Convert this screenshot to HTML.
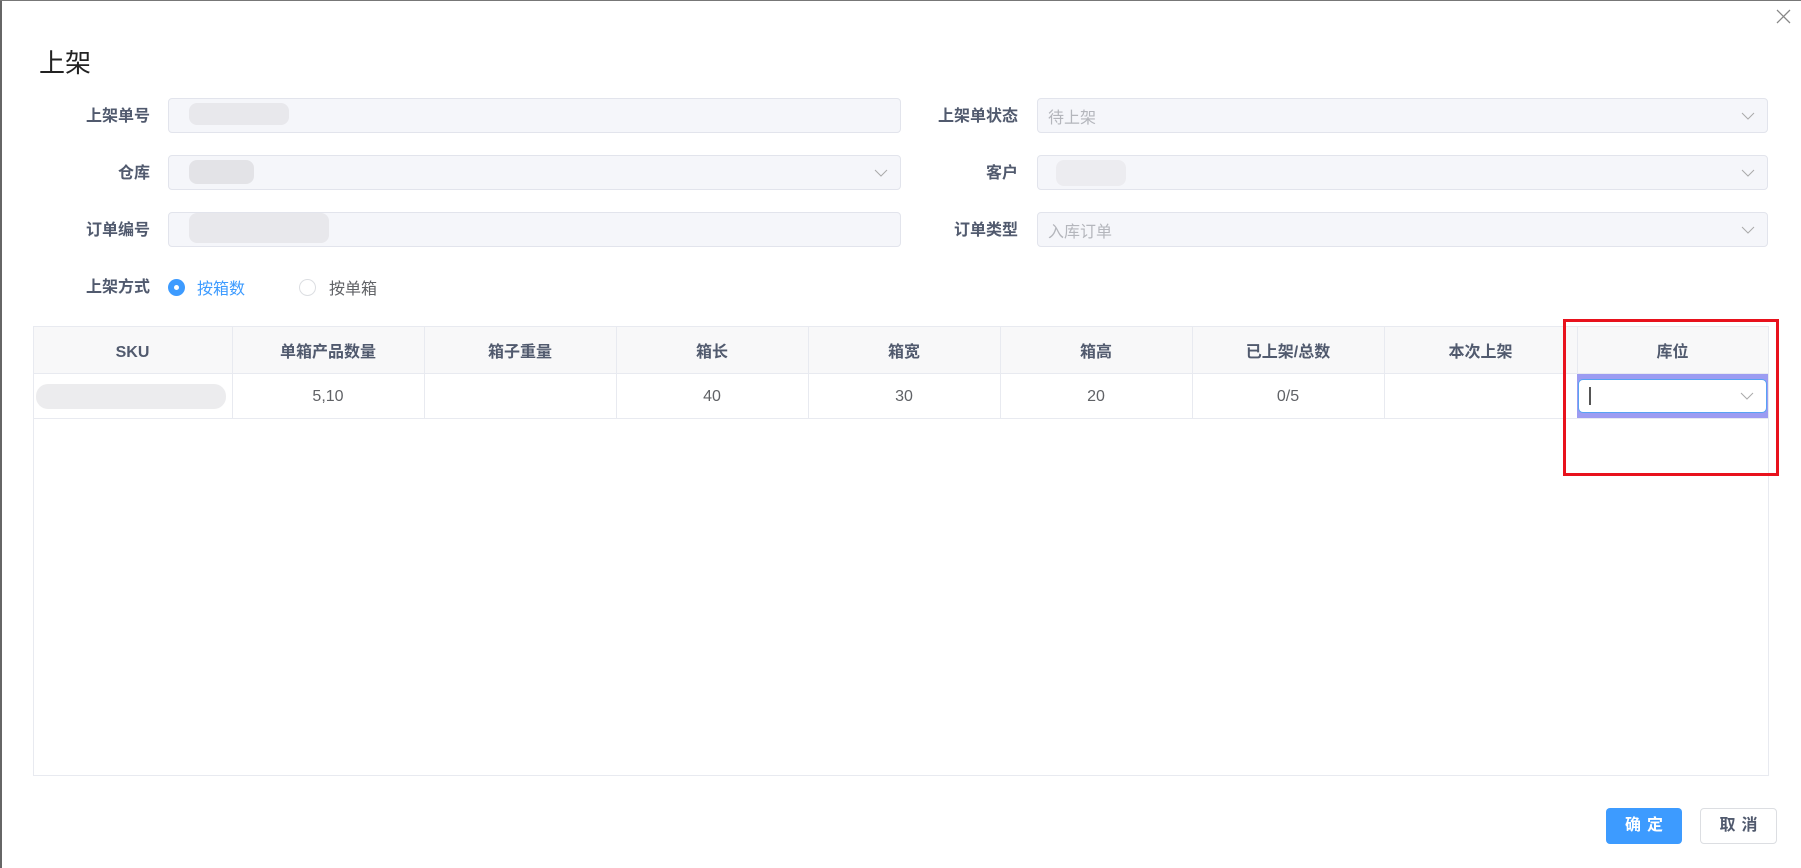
<!DOCTYPE html>
<html><head><meta charset="utf-8"><style>
*{box-sizing:border-box;margin:0;padding:0}
body{width:1801px;height:868px;overflow:hidden;background:#fff;font-family:"Liberation Sans","Noto Sans CJK SC",sans-serif;position:relative}
.a{position:absolute}
.lbl{position:absolute;font-size:16px;font-weight:bold;color:#515a6e;text-align:right;line-height:20px}
.inp{position:absolute;background:#f5f6fa;border:1px solid #e2e4ec;border-radius:4px;height:35px}
.ph{position:absolute;left:10px;top:5px;font-size:16px;color:#b4b6bc}
.chev{position:absolute;right:12px;top:10px;width:14px;height:14px}
.blob{position:absolute;background:#e3e3e7;border-radius:8px}
.th,.td{position:absolute;text-align:center;font-size:16px}
.th{font-weight:bold;color:#515a6e;top:338px}
.td{color:#606266;top:388px}
.vl{position:absolute;top:327px;height:91px;width:1px;background:#e8eaf0}
</style></head><body>
<div class="a" style="left:0;top:0;width:2px;height:868px;background:#666"></div>
<div class="a" style="left:0;top:0;width:1801px;height:1px;background:#777"></div>
<svg class="a" style="left:1776px;top:9px" width="15" height="15"><path d="M1 1L14 14M14 1L1 14" stroke="#888" stroke-width="1.3"/></svg>
<div class="a" style="left:39px;top:43px;font-size:26px;color:#222">上架</div>

<div class="lbl" style="left:40px;width:110px;top:107px">上架单号</div>
<div class="inp" style="left:168px;top:98px;width:733px"><div class="blob" style="left:20px;top:4px;width:100px;height:22px;background:#e8e8ec"></div></div>
<div class="lbl" style="left:40px;width:110px;top:164px">仓库</div>
<div class="inp" style="left:168px;top:155px;width:733px"><div class="blob" style="left:20px;top:4px;width:65px;height:24px"></div><svg class="chev" viewBox="0 0 14 14"><path d="M1 4L7 10L13 4" fill="none" stroke="#aaa"/></svg></div>
<div class="lbl" style="left:40px;width:110px;top:221px">订单编号</div>
<div class="inp" style="left:168px;top:212px;width:733px"><div class="blob" style="left:20px;top:0;width:140px;height:30px;background:#e8e8ec"></div></div>
<div class="lbl" style="left:40px;width:110px;top:278px">上架方式</div>
<div class="a" style="left:168px;top:279px;width:17px;height:17px;border-radius:50%;background:#3d9bff"><div class="a" style="left:6px;top:6px;width:5px;height:5px;border-radius:50%;background:#fff"></div></div>
<div class="a" style="left:197px;top:275px;font-size:16px;color:#3d9bff">按箱数</div>
<div class="a" style="left:299px;top:279px;width:17px;height:17px;border-radius:50%;border:1px solid #dcdee2"></div>
<div class="a" style="left:329px;top:275px;font-size:16px;color:#606266">按单箱</div>

<div class="lbl" style="left:900px;width:118px;top:107px">上架单状态</div>
<div class="inp" style="left:1037px;top:98px;width:731px"><div class="ph">待上架</div><svg class="chev" viewBox="0 0 14 14"><path d="M1 4L7 10L13 4" fill="none" stroke="#aaa"/></svg></div>
<div class="lbl" style="left:900px;width:118px;top:164px">客户</div>
<div class="inp" style="left:1037px;top:155px;width:731px"><div class="blob" style="left:18px;top:4px;width:70px;height:26px;background:#ececf0"></div><svg class="chev" viewBox="0 0 14 14"><path d="M1 4L7 10L13 4" fill="none" stroke="#aaa"/></svg></div>
<div class="lbl" style="left:900px;width:118px;top:221px">订单类型</div>
<div class="inp" style="left:1037px;top:212px;width:731px"><div class="ph">入库订单</div><svg class="chev" viewBox="0 0 14 14"><path d="M1 4L7 10L13 4" fill="none" stroke="#aaa"/></svg></div>

<div class="a" style="left:33px;top:326px;width:1736px;height:450px;border:1px solid #e8eaf0"></div>
<div class="a" style="left:34px;top:327px;width:1734px;height:47px;background:#f8f8f9;border-bottom:1px solid #e8eaf0"></div>
<div class="a" style="left:34px;top:418px;width:1734px;height:1px;background:#e8eaf0"></div>
<div class="vl" style="left:232px"></div><div class="vl" style="left:424px"></div><div class="vl" style="left:616px"></div><div class="vl" style="left:808px"></div><div class="vl" style="left:1000px"></div><div class="vl" style="left:1192px"></div><div class="vl" style="left:1384px"></div><div class="vl" style="left:1577px"></div>
<div class="th" style="left:33px;width:199px;top:344px">SKU</div>
<div class="th" style="left:232px;width:192px">单箱产品数量</div>
<div class="th" style="left:424px;width:192px">箱子重量</div>
<div class="th" style="left:616px;width:192px">箱长</div>
<div class="th" style="left:808px;width:192px">箱宽</div>
<div class="th" style="left:1000px;width:192px">箱高</div>
<div class="th" style="left:1192px;width:192px">已上架/总数</div>
<div class="th" style="left:1384px;width:193px">本次上架</div>
<div class="th" style="left:1577px;width:191px">库位</div>
<div class="blob" style="left:36px;top:384px;width:190px;height:25px;background:#ececee;border-radius:12px"></div>
<div class="td" style="left:232px;width:192px">5,10</div>
<div class="td" style="left:616px;width:192px">40</div>
<div class="td" style="left:808px;width:192px">30</div>
<div class="td" style="left:1000px;width:192px">20</div>
<div class="td" style="left:1192px;width:192px">0/5</div>
<div class="a" style="left:1577px;top:374px;width:191px;height:44px;background:#9c9cf2"></div>
<div class="a" style="left:1578px;top:379px;width:189px;height:34px;background:#fff;border:1px solid #57a3f3;border-radius:5px">
<div class="a" style="left:10px;top:7px;width:2px;height:18px;background:#555"></div>
<svg class="chev" style="top:9px" viewBox="0 0 14 14"><path d="M1 4L7 10L13 4" fill="none" stroke="#aaa"/></svg></div>
<div class="a" style="left:1563px;top:319px;width:216px;height:157px;border:3px solid #e8121d"></div>

<div class="a" style="left:1606px;top:808px;width:76px;height:36px;background:#3d9bff;border-radius:4px;color:#fff;font-size:16px;font-weight:bold;text-align:center;line-height:36px;letter-spacing:6px;padding-left:6px">确定</div>
<div class="a" style="left:1700px;top:808px;width:77px;height:36px;border:1px solid #dcdee2;border-radius:4px;color:#515a6e;font-size:16px;font-weight:bold;text-align:center;line-height:34px;letter-spacing:6px;padding-left:6px">取消</div>
</body></html>
